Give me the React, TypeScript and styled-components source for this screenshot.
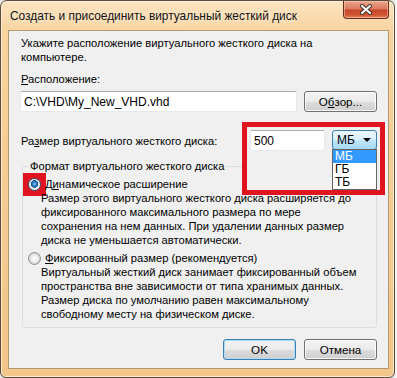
import styled, { createGlobalStyle } from "styled-components";

const GlobalStyle = createGlobalStyle`
html, body {
margin: 0;
padding: 0;
}
body {
background: #f4f4f4;
font-family: "Liberation Sans", Arial, sans-serif;
}
`;

const Page = styled('div')`
width: 397px;
height: 378px;
overflow: hidden;
background: linear-gradient(90deg, #e4e4e4 0, #e4e4e4 395px, #f6f6f6 395px);
`;

const Window = styled('div')`
box-sizing: border-box;
width: 395px;
height: 378px;
display: flex;
flex-direction: column;
padding: 0 5px 8px 7px;
border: 1px solid #5e4b37;
border-radius: 7px 7px 6px 6px;
background: linear-gradient(180deg, #fce4c0 0%, #f8d49f 8%, #f6cd94 40%, #f3c68a 100%);
box-shadow: inset 0 0 0 1px rgba(255, 250, 235, 0.7);
`;

const TitleBar = styled('div')`
height: 29px;
display: flex;
align-items: flex-start;
`;

const Title = styled('div')`
padding: 8px 0 0 2px;
font-size: 11.9px;
line-height: 14px;
color: #111;
text-shadow: 0 0 6px rgba(255, 255, 255, 0.9);
`;

const CloseButton = styled('div')`
margin-left: auto;
width: 46px;
height: 18px;
box-sizing: border-box;
border: 1px solid #6a2d1e;
border-top: none;
border-radius: 0 0 4px 4px;
background: linear-gradient(180deg, #e9a78f 0%, #dc7b5e 45%, #c7462a 55%, #d35a36 85%, #e58a5c 100%);
box-shadow: inset 0 0 0 1px rgba(255, 220, 200, 0.45);
display: flex;
align-items: center;
justify-content: center;
`;

const Content = styled('div')`
flex: 1;
display: flex;
flex-direction: column;
background: #f0f0f0;
border: 1px solid #b2976f;
padding: 5px 11px 0 11px;
font-size: 11.2px;
line-height: 14px;
color: #000;
white-space: nowrap;
`;

const Text = styled('div')<{ $top?: number }>`
padding-left: 1px;
margin-top: ${(p) => p.$top ?? 0}px;
`;

const Row = styled('div')<{ $top: number }>`
display: flex;
align-items: center;
margin-top: ${(p) => p.$top}px;
`;

const TextField = styled('div')<{ $width: number }>`
box-sizing: border-box;
width: ${(p) => p.$width}px;
height: 21px;
padding: 0 3px;
display: flex;
align-items: center;
background: #fff;
border: 1px solid #e3e9ef;
border-top-color: #abadb3;
border-radius: 2px;
font-size: 12px;
position: relative;
z-index: 2;
`;

const Button = styled('div')<{ $default?: boolean }>`
box-sizing: border-box;
width: 73px;
height: 21px;
display: flex;
align-items: center;
justify-content: center;
border: 1px solid ${(p) => (p.$default ? "#3c7fb1" : "#707070")};
border-radius: 3px;
background: linear-gradient(180deg, #f2f2f2 0%, #ebebeb 50%, #dddddd 51%, #cfcfcf 100%);
box-shadow: inset 0 0 0 1px ${(p) => (p.$default ? "#a9dcf6" : "rgba(255,255,255,0.8)")};
font-size: 11.6px;
`;

const PathRow = styled(Row)`
gap: 7px;
`;

const SizeRow = styled(Row)`
justify-content: space-between;
`;

const SizeControls = styled('div')`
position: relative;
display: flex;
gap: 7px;
`;

const RedFrame = styled('div')`
position: absolute;
left: -8px;
top: -8px;
right: -8px;
bottom: -44px;
border: 5px solid #e0141e;
background: #f0f0f0;
z-index: 1;
`;

const Select = styled('div')`
box-sizing: border-box;
width: 45px;
height: 20px;
padding: 0 5px 0 4px;
display: flex;
align-items: center;
justify-content: space-between;
border: 1px solid #3c7fb1;
border-radius: 3px;
background: linear-gradient(180deg, #eaf6fd 0%, #d9f0fc 50%, #bee6fd 51%, #a7d9f5 100%);
font-size: 12px;
position: relative;
z-index: 2;
`;

const Arrow = styled('span')`
width: 0;
height: 0;
border-left: 4px solid transparent;
border-right: 4px solid transparent;
border-top: 4px solid #000;
`;

const DropList = styled('div')`
position: absolute;
left: 82px;
top: 19px;
width: 45px;
box-sizing: border-box;
border: 1px solid #646464;
background: #fff;
font-size: 12px;
z-index: 3;
`;

const DropItem = styled('div')<{ $active?: boolean }>`
height: 13px;
line-height: 13px;
padding-left: 2px;
background: ${(p) => (p.$active ? "#3399ff" : "#fff")};
color: ${(p) => (p.$active ? "#fff" : "#000")};
`;

const GroupBox = styled('fieldset')`
margin: 8px 0 0 2px;
padding: 4px 5px 6px 5px;
border: 1px solid #d5dfe5;
border-radius: 3px;
min-width: 0;
`;

const Legend = styled('legend')`
padding: 0 2px;
margin-left: 0;
`;

const RadioRow = styled('div')<{ $top?: number }>`
display: flex;
align-items: center;
gap: 4px;
margin-top: ${(p) => p.$top ?? 0}px;
`;

const RadioMark = styled('span')<{ $marked?: boolean }>`
display: flex;
margin: ${(p) => (p.$marked ? "-5px" : "0")};
padding: ${(p) => (p.$marked ? "5px" : "0")};
background: ${(p) => (p.$marked ? "#e0141e" : "transparent")};
flex: none;
`;

const Radio = styled('span')<{ $checked?: boolean }>`
box-sizing: border-box;
width: 13px;
height: 13px;
border-radius: 50%;
border: 1px solid ${(p) => (p.$checked ? "#2c628b" : "#8e8f8f")};
background: ${(p) =>
    p.$checked
        ? "radial-gradient(circle at 50% 45%, #8fd0f5 0, #2a7fc8 2px, #0d4f8e 3.5px, #e8e8e8 4px, #f6f6f6 100%)"
        : "radial-gradient(circle at 50% 50%, #ffffff 0, #f0f0f0 3px, #d8d8d8 5px, #f4f4f4 100%)"};
`;

const Description = styled('div')`
margin-left: 13px;
`;

const Footer = styled('div')`
display: flex;
justify-content: flex-end;
gap: 8px;
margin-top: 11px;
`;

export default function App() {
    return (
        <Page>
            <GlobalStyle />
            <Window>
                <TitleBar>
                    <Title>Создать и присоединить виртуальный жесткий диск</Title>
                    <CloseButton>
                        <svg width="14" height="11" viewBox="0 0 14 11">
                            <path d="M3 2 L11 9 M11 2 L3 9" stroke="#3a2a24" strokeWidth="4" strokeLinecap="round" />
                            <path d="M3 2 L11 9 M11 2 L3 9" stroke="#ffffff" strokeWidth="2.2" strokeLinecap="round" />
                        </svg>
                    </CloseButton>
                </TitleBar>
                <Content>
                    <Text>
                        Укажите расположение виртуального жесткого диска на
                        <br />
                        компьютере.
                    </Text>
                    <Text $top={8}>
                        <u>Р</u>асположение:
                    </Text>
                    <PathRow $top={5}>
                        <TextField $width={277}>C:\VHD\My_New_VHD.vhd</TextField>
                        <Button>
                            О<u>б</u>зор...
                        </Button>
                    </PathRow>
                    <SizeRow $top={18}>
                        <Text>
                            Ра<u>з</u>мер виртуального жесткого диска:
                        </Text>
                        <SizeControls>
                            <RedFrame />
                            <TextField $width={75}>500</TextField>
                            <Select>
                                МБ
                                <Arrow />
                            </Select>
                            <DropList>
                                <DropItem $active>МБ</DropItem>
                                <DropItem>ГБ</DropItem>
                                <DropItem>ТБ</DropItem>
                            </DropList>
                        </SizeControls>
                    </SizeRow>
                    <GroupBox>
                        <Legend>Формат виртуального жесткого диска</Legend>
                        <RadioRow>
                            <RadioMark $marked>
                                <Radio $checked />
                            </RadioMark>
                            <span>
                                Д<u>и</u>намическое расширение
                            </span>
                        </RadioRow>
                        <Description>
                            Размер этого виртуального жесткого диска расширяется до
                            <br />
                            фиксированного максимального размера по мере
                            <br />
                            сохранения на нем данных. При удалении данных размер
                            <br />
                            диска не уменьшается автоматически.
                        </Description>
                        <RadioRow $top={4}>
                            <RadioMark>
                                <Radio />
                            </RadioMark>
                            <span>
                                <u>Ф</u>иксированный размер (рекомендуется)
                            </span>
                        </RadioRow>
                        <Description>
                            Виртуальный жесткий диск занимает фиксированный объем
                            <br />
                            пространства вне зависимости от типа хранимых данных.
                            <br />
                            Размер диска по умолчанию равен максимальному
                            <br />
                            свободному месту на физическом диске.
                        </Description>
                    </GroupBox>
                    <Footer>
                        <Button $default>OK</Button>
                        <Button>Отмена</Button>
                    </Footer>
                </Content>
            </Window>
        </Page>
    );
}
